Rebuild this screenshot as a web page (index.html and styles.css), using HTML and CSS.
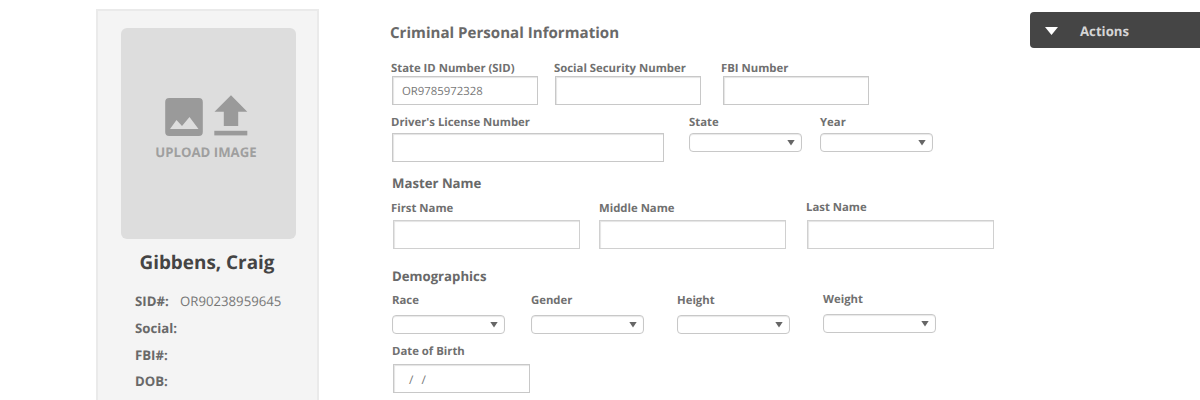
FILE: index.html
```html
<!DOCTYPE html>
<html lang="en">
<head>
<meta charset="utf-8">
<title>Criminal Personal Information</title>
<link rel="stylesheet" href="styles.css">
</head>
<body>
<div class="page">
  <aside class="profile">
    <div class="upload">
      <svg class="upload-icons" width="84" height="42" viewBox="0 0 84 42">
        <rect x="0.2" y="3" width="37.6" height="38" rx="4" fill="#9a9a9a"/>
        <path d="M5 34 L11.500 25 L17 31 L24.500 22 L33.500 34 Z" fill="#ddd"/>
        <path d="M66 0.300 L82.300 16.800 H73.200 V31 H58.800 V16.800 H49.500 Z" fill="#9a9a9a"/>
        <rect x="49.300" y="35.800" width="33" height="4.600" fill="#9a9a9a"/>
      </svg>
      <span class="upload-text">UPLOAD IMAGE</span>
    </div>
    <h2 class="person">Gibbens, Craig</h2>
    <dl class="facts">
      <div class="fact"><dt>SID#:</dt><dd>OR90238959645</dd></div>
      <div class="fact"><dt>Social:</dt></div>
      <div class="fact"><dt>FBI#:</dt></div>
      <div class="fact"><dt>DOB:</dt></div>
    </dl>
  </aside>
  <main class="form">
    <h1 class="title"><span>Criminal Personal Information</span></h1>
    <div class="row row-ids">
      <div class="field id"><label><span>State ID Number (SID)</span></label><div class="input value">OR9785972328</div></div>
      <div class="field id"><label><span>Social Security Number</span></label><div class="input"></div></div>
      <div class="field id fbi"><label><span>FBI Number</span></label><div class="input"></div></div>
    </div>
    <div class="row row-license">
      <div class="field license"><label><span>Driver's License Number</span></label><div class="input"></div></div>
      <div class="field drop"><label><span>State</span></label><div class="select"><i class="caret"></i></div></div>
      <div class="field drop"><label><span>Year</span></label><div class="select"><i class="caret"></i></div></div>
    </div>
    <h3 class="section master"><span>Master Name</span></h3>
    <div class="row row-name">
      <div class="field name first"><label><span>First Name</span></label><div class="input"></div></div>
      <div class="field name"><label><span>Middle Name</span></label><div class="input"></div></div>
      <div class="field name last"><label><span>Last Name</span></label><div class="input"></div></div>
    </div>
    <h3 class="section demo"><span>Demographics</span></h3>
    <div class="row row-demo">
      <div class="field drop race"><label><span>Race</span></label><div class="select"><i class="caret"></i></div></div>
      <div class="field drop gender"><label><span>Gender</span></label><div class="select"><i class="caret"></i></div></div>
      <div class="field drop height"><label><span>Height</span></label><div class="select"><i class="caret"></i></div></div>
      <div class="field drop weight"><label><span>Weight</span></label><div class="select"><i class="caret"></i></div></div>
    </div>
    <div class="row row-dob">
      <div class="field dob"><label><span>Date of Birth</span></label><div class="input value slashes"><span>/</span><span>/</span></div></div>
    </div>
  </main>
  <div class="actions"><i class="actions-caret"></i><span>Actions</span></div>
</div>
</body>
</html>
```
FILE: styles.css
```css
* { box-sizing: border-box; }
body {
  margin: 0;
  background: #fff;
  color: #696969;
  font-family: "Open Sans", "Noto Sans", sans-serif;
  text-rendering: geometricPrecision;
  overflow: hidden;
}
h1, h2, h3, dl, dd { margin: 0; }
.page {
  display: flex;
  align-items: flex-start;
  height: 400px;
  overflow: hidden;
}
.profile {
  flex: none;
  width: 223px;
  height: 420px;
  margin: 9px 0 0 96px;
  padding: 17px 22px 0 23px;
  border: 2px solid #eaeaea;
  background: #f4f4f4;
}
.upload {
  display: flex;
  flex-direction: column;
  align-items: center;
  width: 175px;
  height: 211px;
  padding-top: 67px;
  border-radius: 6px;
  background: #ddd;
}
.upload-icons { display: block; margin-right: 3px; }
.upload-text {
  margin: 6px 5px 0 0;
  font-size: 13.2px;
  line-height: 18px;
  font-weight: 700;
  color: #9f9f9f;
  white-space: nowrap;
}
.person {
  margin-top: 10px;
  padding-right: 2px;
  font-size: 18.900px;
  line-height: 26px;
  font-weight: 700;
  color: #444;
  text-align: center;
  white-space: nowrap;
}
.facts {
  margin: 13px 0 0 14px;
  font-size: 13.2px;
}
.fact {
  display: flex;
  height: 26.800px;
  line-height: 26.800px;
  white-space: nowrap;
}
.fact dt { width: 45px; font-weight: 700; }
.fact dd { color: #777; }
.form {
  flex: none;
  width: 711px;
  padding: 20px 0 0 72px;
}
.title {
  height: 24px;
  margin-left: -1px;
  font-size: 15.100px;
  line-height: 26px;
  font-weight: 700;
  white-space: nowrap;
}
.row { display: flex; width: 639px; }
.row-ids { margin-top: 16px; }
.row-license { height: 48px; margin-top: 9px; }
.row-name { margin-top: 7px; }
.row-demo { height: 42px; margin-top: 6px; }
.row-dob { margin-top: 9px; }
.field { flex: none; }
.field label {
  display: block;
  height: 16px;
  font-size: 11.350px;
  line-height: 18px;
  font-weight: 700;
  color: #707070;
  white-space: nowrap;
}
.input {
  height: 29px;
  margin-left: 1px;
  border: 1px solid #c8c8c8;
  background: #fff;
  box-shadow: inset 1px 1px 1px #e4e4e4;
}
.value {
  padding-left: 9px;
  font-size: 11.350px;
  line-height: 29px;
  color: #777;
}
.id { width: 147px; margin-right: 16px; }
.fbi { width: 148px; margin-left: 4px; }
.fbi .input { margin-left: 2px; }
.license { width: 273px; margin-right: 25px; }
.license .input { margin-top: 3px; }
.drop { width: 114px; }
.drop + .drop { margin-left: 17px; }
.select {
  display: flex;
  align-items: center;
  justify-content: flex-end;
  width: 113px;
  height: 19px;
  margin-top: 3px;
  padding-right: 6px;
  border: 1px solid #c8c8c8;
  border-radius: 4px;
  background: #fff;
  box-shadow: inset 0 1px 1px #e8e8e8;
}
.caret {
  width: 8px;
  height: 6px;
  background: #666;
  clip-path: polygon(0 0, 100% 0, 50% 100%);
}
.section {
  height: 20px;
  margin-left: 1px;
  font-size: 13.200px;
  line-height: 20px;
  font-weight: 700;
  white-space: nowrap;
}
.master { margin-top: 11px; }
.demo { margin-top: 17px; }
.name { width: 187px; margin-right: 20px; }
.name.first { width: 189px; margin-right: 19px; }
.name .input { width: 187px; margin: 4px 0 0 0; border-color: #d0d0d0; }
.name.first .input { margin-left: 2px; }
.name.last .input { margin: 5px 0 0 1px; }
.last label { margin-top: -1px; }
.race { margin-left: 1px; }
.row-demo .select { margin-top: 7px; }
.row-demo .gender { margin-left: 25px; }
.row-demo .height { margin-left: 32px; }
.row-demo .weight { margin: -1px 0 0 32px; }
.dob { width: 138px; margin-left: 1px; }
.dob .input { margin-top: 5px; }
.slashes {
  display: flex;
  gap: 8px;
  padding-left: 15px;
  font-size: 12px;
}
.actions {
  display: flex;
  align-items: center;
  flex: none;
  width: 180px;
  height: 36px;
  margin-top: 12px;
  padding-left: 15px;
  border-radius: 4px 0 0 4px;
  background: #454545;
  color: #d5d5d5;
  font-size: 13.200px;
  font-weight: 700;
}
.actions span { margin-left: 22px; padding-top: 2px; }
.actions-caret {
  width: 13px;
  height: 8px;
  margin-top: 2px;
  background: #fff;
  clip-path: polygon(0 0, 100% 0, 50% 100%);
}
```
